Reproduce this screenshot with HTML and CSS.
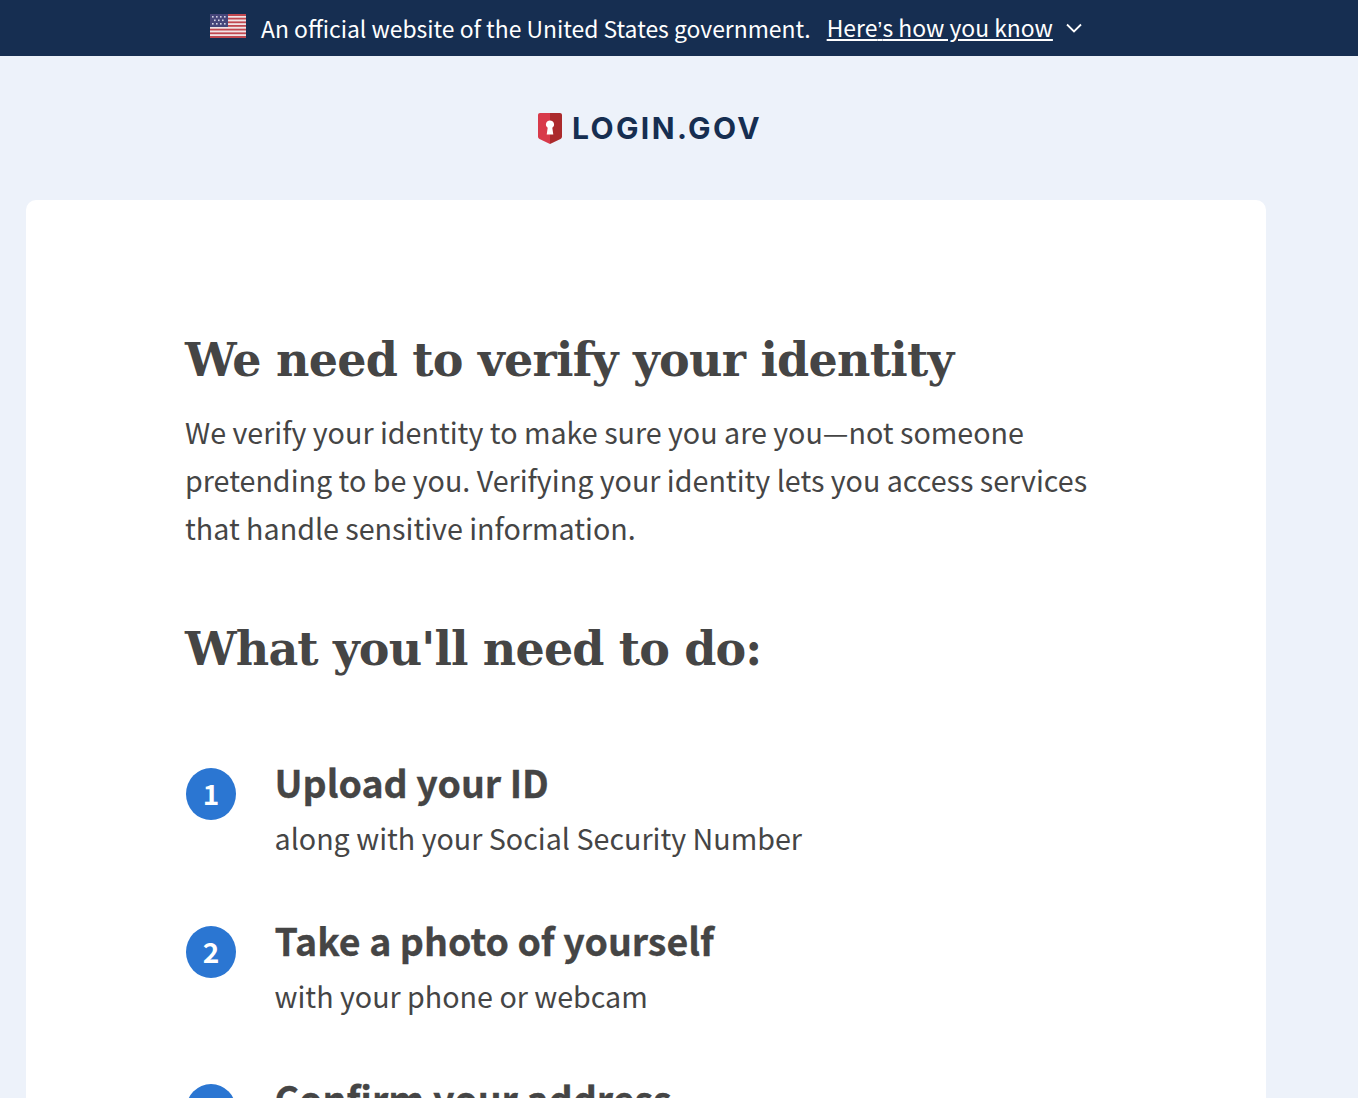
FILE: index.html
```html
<!DOCTYPE html>
<html lang="en">
<head>
    <meta charset="UTF-8">
    <meta name="viewport" content="width=device-width, initial-scale=1.0">
    <title>Login.gov - Verify your identity</title>
    <link rel="stylesheet" href="styles.css">
</head>
<body>
    <div class="gov-banner">
        <div class="gov-inner">
            <svg class="flag" width="36" height="24" viewBox="0 0 36 24">
                <rect width="36" height="24" fill="#f0e4e6"/>
                <g fill="#c0474f">
                    <rect y="0" width="36" height="2"/>
                    <rect y="3.7" width="36" height="1.8"/>
                    <rect y="7.4" width="36" height="1.8"/>
                    <rect y="11" width="36" height="1.8"/>
                    <rect y="14.7" width="36" height="1.8"/>
                    <rect y="18.4" width="36" height="1.8"/>
                    <rect y="22" width="36" height="2"/>
                </g>
                <rect width="18" height="13" fill="#46467a"/>
                <g fill="#d5d5e5">
                    <rect x="2" y="2" width="1.6" height="1.6"/><rect x="6" y="2" width="1.6" height="1.6"/><rect x="10" y="2" width="1.6" height="1.6"/><rect x="14" y="2" width="1.6" height="1.6"/>
                    <rect x="4" y="5.5" width="1.6" height="1.6"/><rect x="8" y="5.5" width="1.6" height="1.6"/><rect x="12" y="5.5" width="1.6" height="1.6"/>
                    <rect x="2" y="9" width="1.6" height="1.6"/><rect x="6" y="9" width="1.6" height="1.6"/><rect x="10" y="9" width="1.6" height="1.6"/><rect x="14" y="9" width="1.6" height="1.6"/>
                </g>
            </svg>
            <span class="gov-text">An official website of the United States government.</span>
            <a class="gov-link" href="#">Here<span class="apos">’</span>s how you know</a>
            <svg class="chevron" width="16" height="10" viewBox="0 0 16 10" fill="none">
                <path d="M1 1.5l7 7 7-7" stroke="#fff" stroke-width="1.8"/>
            </svg>
        </div>
    </div>

    <div class="page">
        <div class="logo">
            <svg width="24" height="31" viewBox="0 0 24 31">
                <path d="M2 0h10v31L1.500 26C.6 25.500 0 24.500 0 23.500V2C0 .9.900 0 2 0z" fill="#d83a4a"/>
                <path d="M12 0h10c1.100 0 2 .9 2 2v21.500c0 1-.6 2-1.500 2.500L12 31z" fill="#ab2a2c"/>
                <path d="M12 7.500a4 4 0 0 1 2.300 7.300l1 6.700H8.700l1-6.700A4 4 0 0 1 12 7.500z" fill="#fff"/>
            </svg>
            <span class="logo-text">LOGIN.GOV</span>
        </div>

        <main class="card">
            <h1 class="title">We need to verify your identity</h1>
            <p class="intro">We verify your identity to make sure you are you—not someone pretending to be you. Verifying your identity lets you access services that handle sensitive information.</p>
            <h2 class="subtitle">What you'll need to do:</h2>
            <ol class="steps">
                <li class="step">
                    <span class="step-num">1</span>
                    <div>
                        <div class="step-title">Upload your ID</div>
                        <div class="step-sub">along with your Social Security Number</div>
                    </div>
                </li>
                <li class="step">
                    <span class="step-num">2</span>
                    <div>
                        <div class="step-title">Take a photo of yourself</div>
                        <div class="step-sub">with your phone or webcam</div>
                    </div>
                </li>
                <li class="step">
                    <span class="step-num">3</span>
                    <div>
                        <div class="step-title">Confirm your address</div>
                        <div class="step-sub">with a phone number or a letter</div>
                    </div>
                </li>
            </ol>
        </main>
    </div>
</body>
</html>
```

FILE: styles.css
```css
html, body {
    height: 100%;
    overflow: hidden;
}

body {
    margin: 0;
    background-color: #edf2fa;
    color: #454545;
    font-family: "Noto Sans CJK SC", "Open Sans", sans-serif;
}

/* gov banner */
.gov-banner {
    background-color: #162e51;
    height: 56px;
}
.gov-inner {
    width: 1292px;
    height: 56px;
    display: flex;
    align-items: center;
    justify-content: center;
    color: #fff;
    font-size: 22.9px;
    line-height: 52px;
}
.flag {
    margin: 0 15px 4px 0;
}
.gov-text {
    margin-right: 16px;
}
.gov-link {
    color: #fff;
    text-decoration: underline;
}
.apos {
    font-family: "Liberation Sans", sans-serif;
}
.chevron {
    margin-left: 13px;
}

.page {
    width: 1292px;
}

/* logo */
.logo {
    height: 144px;
    display: flex;
    align-items: center;
    justify-content: center;
    gap: 10px;
    padding-left: 8px;
    box-sizing: border-box;
}
.logo-text {
    font-family: "Inter", sans-serif;
    font-size: 30px;
    font-weight: 700;
    letter-spacing: 2.4px;
    color: #162e51;
}

/* main card */
.card {
    margin: 0 26px;
    background: #fff;
    border-radius: 10px;
    padding: 128px 160px 0 159px;
    height: 1000px;
}
.title {
    margin: 0;
    font-family: "DejaVu Serif", serif;
    font-size: 46px;
    font-weight: 700;
    letter-spacing: -0.75px;
    line-height: 64px;
}
.intro {
    margin: 16px 0 0;
    font-size: 28.67px;
    line-height: 48px;
}
.subtitle {
    margin: 65px 0 0;
    font-family: "DejaVu Serif", serif;
    font-size: 46px;
    font-weight: 700;
    letter-spacing: -0.85px;
    line-height: 64px;
}

/* steps */
.steps {
    list-style: none;
    margin: 76px 0 0;
    padding: 0;
}
.step {
    display: flex;
    align-items: flex-start;
    margin-bottom: 52px;
}
.step-num {
    flex: none;
    width: 50px;
    height: 52px;
    margin: 11px 38.5px 0 1px;
    border-radius: 50%;
    background: #2b76d2;
    color: #fff;
    font-size: 28px;
    font-weight: 700;
    line-height: 50px;
    text-align: center;
}
.step-title {
    font-size: 37.5px;
    font-weight: 700;
    line-height: 50px;
    -webkit-text-stroke: 0.3px #454545;
}
.step-sub {
    margin-top: 6px;
    font-size: 28.67px;
    line-height: 50px;
}
```
